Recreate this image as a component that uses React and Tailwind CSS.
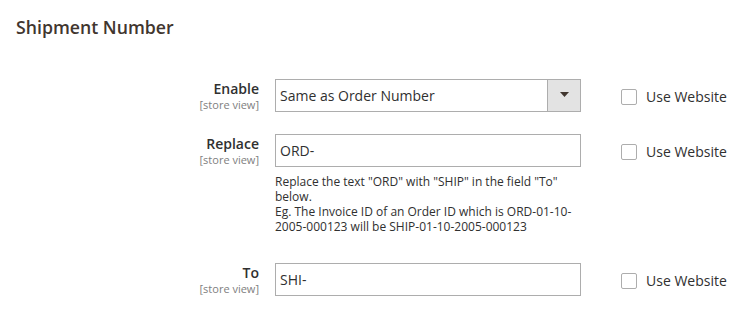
import { useState } from "react";

function FieldLabel({ text }) {
  return (
    <div className="w-[259px] shrink-0 text-right">
      <div className="text-[14px] leading-[19px] font-semibold text-[#303030]">{text}</div>
      <div className="text-[11px] leading-[14px] text-[#808080]">[store view]</div>
    </div>
  );
}

function UseWebsite({ checked, onChange }) {
  return (
    <label className="ml-[40px] flex h-[33px] items-center pt-[1px] cursor-pointer">
      <input
        type="checkbox"
        checked={checked}
        onChange={onChange}
        className="peer sr-only"
      />
      <span className="mt-[2px] block h-[16px] w-[16px] rounded-[2px] border border-[#adadad] bg-white" />
      <span className="ml-[9px] text-[14px] leading-[19px] text-[#303030]">Use Website</span>
    </label>
  );
}

export default function App() {
  const [useSite, setUseSite] = useState({ enable: false, replace: false, to: false });
  const [replace, setReplace] = useState("ORD-");
  const [to, setTo] = useState("SHI-");

  const toggle = (key) => setUseSite((prev) => ({ ...prev, [key]: !prev[key] }));

  return (
    <div
      className="w-[752px] h-[320px] bg-white text-[#303030]"
      style={{ fontFamily: "'Open Sans', 'Liberation Sans', sans-serif" }}
    >
      <h2 className="pl-[16px] pt-[16px] text-[17.7px] leading-[23px] font-semibold text-[#41362f]">
        Shipment Number
      </h2>

      {/* Enable */}
      <div className="mt-[40px] flex items-start">
        <FieldLabel text="Enable" />
        <div className="ml-[16px] flex h-[33px] w-[306px] shrink-0 border border-[#adadad] bg-white">
          <div className="flex flex-1 items-center pl-[4px] text-[14px] text-[#303030]">
            Same as Order Number
          </div>
          <div className="flex w-[33px] items-center justify-center border-l border-[#adadad] bg-[#e3e3e3]">
            <svg width="9" height="5" viewBox="0 0 9 5" className="-mt-[2px]">
              <path d="M0 0h9L4.5 5z" fill="#41362f" />
            </svg>
          </div>
        </div>
        <UseWebsite checked={useSite.enable} onChange={() => toggle("enable")} />
      </div>

      {/* Replace */}
      <div className="mt-[22px] flex items-start">
        <FieldLabel text="Replace" />
        <div className="ml-[16px] w-[306px] shrink-0">
          <input
            value={replace}
            onChange={(e) => setReplace(e.target.value)}
            className="block h-[33px] w-full border border-[#adadad] bg-white pl-[4px] text-[14px] text-[#303030] outline-none"
          />
          <div className="mt-[7px] text-[12px] leading-[15px] text-[#303030]">
            Replace the text "ORD" with "SHIP" in the field "To" below.
            <br />
            Eg. The Invoice ID of an Order ID which is ORD-01-10-2005-000123 will be SHIP-01-10-2005-000123
          </div>
        </div>
        <UseWebsite checked={useSite.replace} onChange={() => toggle("replace")} />
      </div>

      {/* To */}
      <div className="mt-[29px] flex items-start">
        <FieldLabel text="To" />
        <div className="ml-[16px] w-[306px] shrink-0">
          <input
            value={to}
            onChange={(e) => setTo(e.target.value)}
            className="block h-[33px] w-full border border-[#adadad] bg-white pl-[4px] text-[14px] text-[#303030] outline-none"
          />
        </div>
        <UseWebsite checked={useSite.to} onChange={() => toggle("to")} />
      </div>
    </div>
  );
}
